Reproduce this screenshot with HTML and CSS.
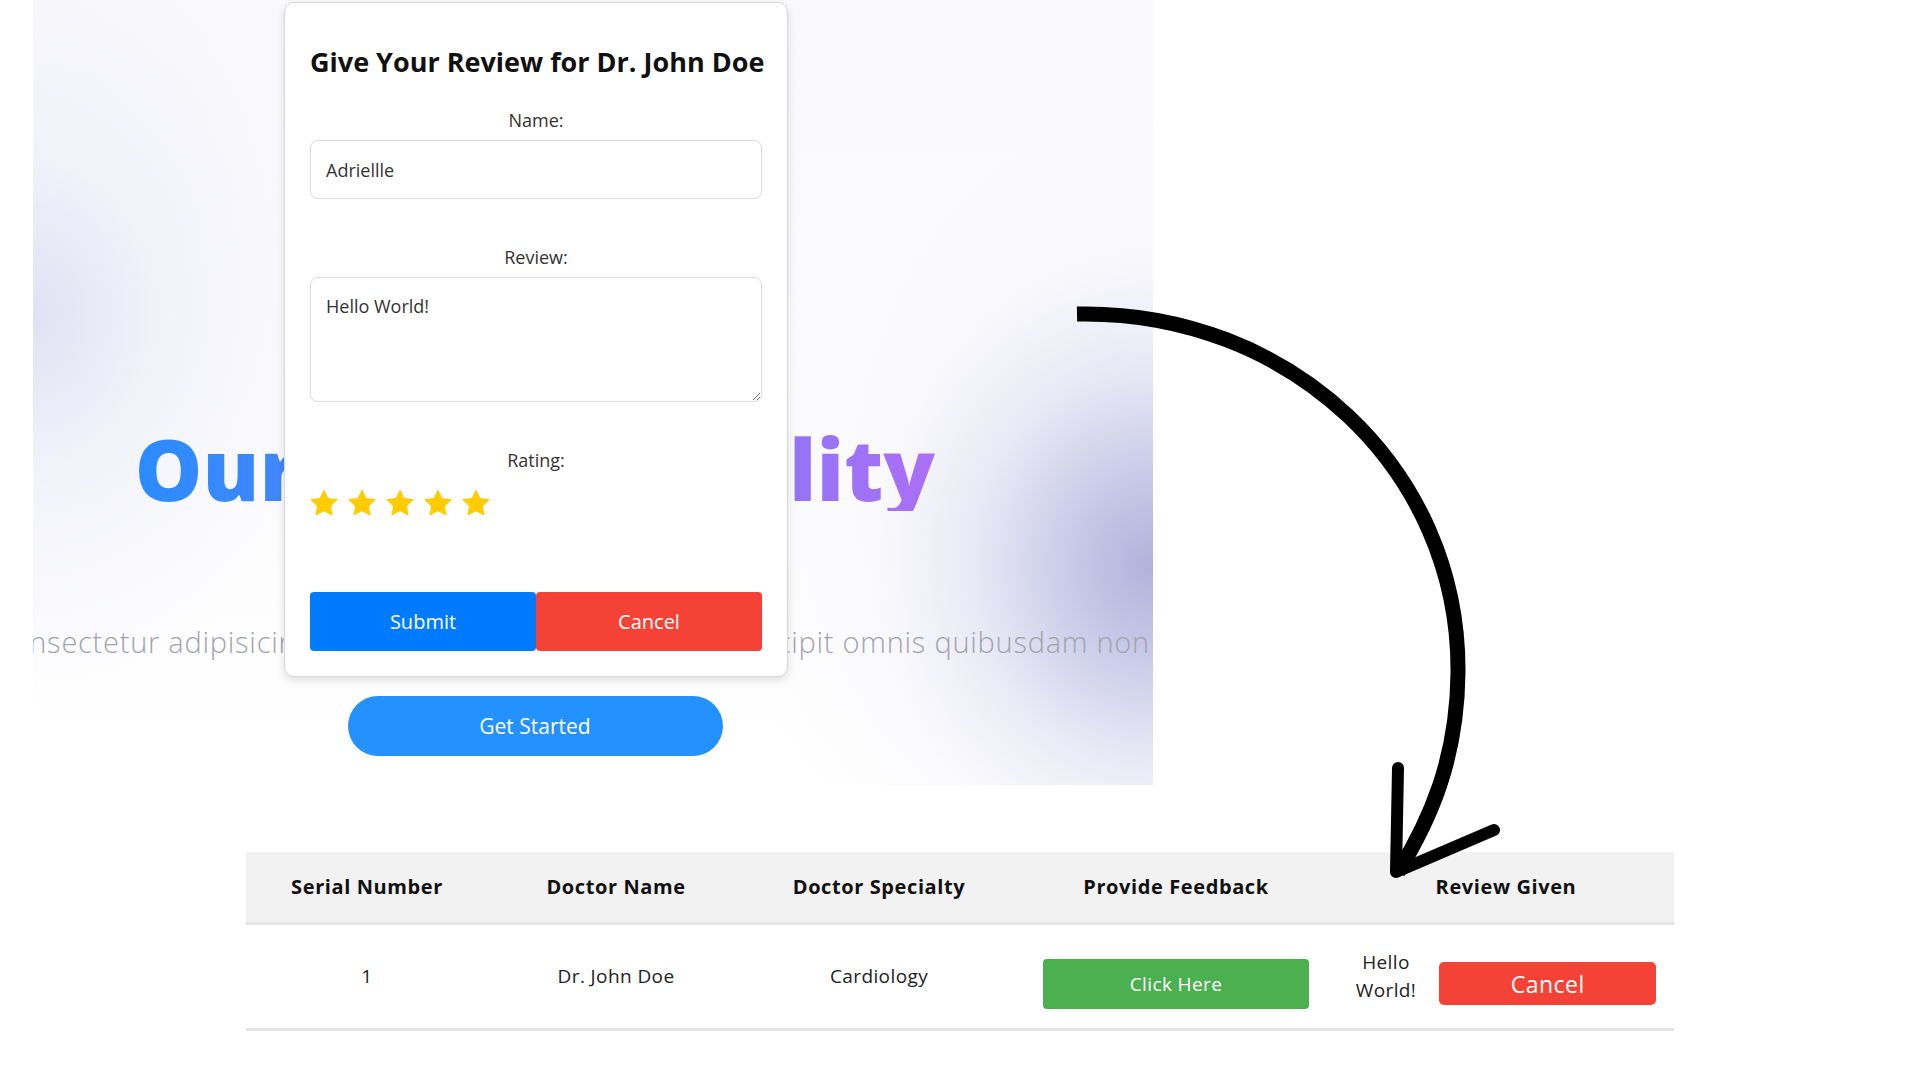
FILE: index.html
```html
<!DOCTYPE html>
<html lang="en">
<head>
<meta charset="utf-8">
<title>Doctor Review</title>
<link rel="stylesheet" href="styles.css">
</head>
<body>
<div class="canvas">
  <section class="hero">
    <h1 class="hero-title">Our Speciality</h1>
    <div class="hero-sub-row">
      <p class="hero-sub">Lorem ipsum dolor sit amet consectetur adipisicing elit. Quos illo eius, maxime et suscipit omnis quibusdam non</p>
    </div>
    <button class="btn-start" type="button">Get Started</button>

    <div class="modal">
      <h2 class="modal-title">Give Your Review for Dr. John Doe</h2>
      <div class="field">
        <label for="name">Name:</label>
        <input id="name" type="text" value="Adriellle">
      </div>
      <div class="field">
        <label for="review">Review:</label>
        <textarea id="review">Hello World!</textarea>
      </div>
      <div class="field field-rating">
        <label>Rating:</label>
        <div class="stars">
          <svg class="star" viewBox="2 2 20 19.1"><polygon points="12,2 15.09,8.26 22,9.27 17,14.14 18.18,21.02 12,17.77 5.82,21.02 7,14.14 2,9.27 8.91,8.26"/></svg>
          <svg class="star" viewBox="2 2 20 19.1"><polygon points="12,2 15.09,8.26 22,9.27 17,14.14 18.18,21.02 12,17.77 5.82,21.02 7,14.14 2,9.27 8.91,8.26"/></svg>
          <svg class="star" viewBox="2 2 20 19.1"><polygon points="12,2 15.09,8.26 22,9.27 17,14.14 18.18,21.02 12,17.77 5.82,21.02 7,14.14 2,9.27 8.91,8.26"/></svg>
          <svg class="star" viewBox="2 2 20 19.1"><polygon points="12,2 15.09,8.26 22,9.27 17,14.14 18.18,21.02 12,17.77 5.82,21.02 7,14.14 2,9.27 8.91,8.26"/></svg>
          <svg class="star" viewBox="2 2 20 19.1"><polygon points="12,2 15.09,8.26 22,9.27 17,14.14 18.18,21.02 12,17.77 5.82,21.02 7,14.14 2,9.27 8.91,8.26"/></svg>
        </div>
      </div>
      <div class="actions">
        <button class="btn btn-submit" type="button">Submit</button>
        <button class="btn btn-cancel" type="button">Cancel</button>
      </div>
    </div>
  </section>

  <table class="doctors">
    <colgroup>
      <col class="c1"><col class="c2"><col class="c3"><col class="c4"><col class="c5">
    </colgroup>
    <thead>
      <tr>
        <th>Serial Number</th>
        <th>Doctor Name</th>
        <th>Doctor Specialty</th>
        <th>Provide Feedback</th>
        <th>Review Given</th>
      </tr>
    </thead>
    <tbody>
      <tr>
        <td>1</td>
        <td>Dr. John Doe</td>
        <td>Cardiology</td>
        <td><button class="btn-feedback" type="button">Click Here</button></td>
        <td>
          <div class="review-cell">
            <span class="review-text">Hello World!</span>
            <button class="btn-remove" type="button">Cancel</button>
          </div>
        </td>
      </tr>
    </tbody>
  </table>

  <svg class="arrow" width="1920" height="1080" viewBox="0 0 1920 1080">
    <path d="M1077,314 C1290,310 1460,470 1458,673 C1457,760 1430,820 1398,872" fill="none" stroke="#000" stroke-width="15"/>
    <path d="M1398,768 L1396,872 L1494,830" fill="none" stroke="#000" stroke-width="12" stroke-linecap="round" stroke-linejoin="round"/>
  </svg>
</div>
</body>
</html>
```
FILE: styles.css
```css
* { box-sizing: border-box; }

html, body {
  margin: 0;
  padding: 0;
  background: #fff;
}

body {
  font-family: "Open Sans", "Liberation Sans", sans-serif;
  color: #222;
}

input, textarea, button {
  font-family: inherit;
}

.canvas {
  position: relative;
  width: 1920px;
  height: 1080px;
  overflow: hidden;
}

/* ---------- hero ---------- */
.hero {
  position: relative;
  margin-left: 33px;
  width: 1120px;
  height: 785px;
  overflow: hidden;
  display: flex;
  flex-direction: column;
  align-items: center;
  padding: 426px 116px 0 0;
  background:
    radial-gradient(ellipse 400px 440px at 100% 72%, rgba(176,178,219,1) 0%, rgba(190,192,228,.85) 20%, rgba(216,217,239,.55) 45%, rgba(240,240,249,.25) 70%, rgba(255,255,255,0) 100%),
    radial-gradient(ellipse 300px 380px at 0% 40%, rgba(224,226,244,1) 0%, rgba(237,238,249,.6) 45%, rgba(255,255,255,0) 100%),
    linear-gradient(180deg, #f9f9fc 0%, #fdfdfe 70%, #ffffff 100%);
}

.hero-title {
  margin: 0;
  font-size: 85px;
  font-weight: 800;
  line-height: 1;
  white-space: nowrap;
  word-spacing: 185px;
  background: linear-gradient(90deg, #2a8cff 0%, #ab6ff5 100%);
  -webkit-background-clip: text;
  background-clip: text;
  color: transparent;
}

.hero-sub-row {
  align-self: stretch;
  margin: 113px -113px 0 0;
  display: flex;
  justify-content: flex-end;
}

.hero-sub {
  margin: 0;
  white-space: nowrap;
  font-size: 29px;
  font-weight: 300;
  letter-spacing: .75px;
  line-height: 36px;
  color: #a2a3ad;
}

.btn-start {
  margin-top: 36px;
  width: 375px;
  height: 60px;
  border: none;
  border-radius: 30px;
  background: #2391fe;
  color: #fff;
  font-size: 21px;
  font-weight: 500;
}

/* ---------- modal ---------- */
.modal {
  position: absolute;
  left: 251px;
  top: 2px;
  width: 504px;
  height: 675px;
  background: #fff;
  border: 1px solid #d8d8d8;
  border-radius: 10px;
  box-shadow: 0 4px 10px rgba(0,0,0,.12);
  padding: 42px 25px 0;
  display: flex;
  flex-direction: column;
}

.modal-title {
  margin: 0 0 30px;
  font-size: 27px;
  font-weight: 700;
  line-height: 33px;
  letter-spacing: 0;
  text-align: center;
  color: #111;
  white-space: nowrap;
}

.field {
  display: flex;
  flex-direction: column;
  gap: 8px;
  margin-bottom: 46px;
}

.field label {
  display: block;
  font-size: 18px;
  line-height: 24px;
  text-align: center;
  color: #333;
}

.field input {
  height: 59px;
  border: 1px solid #dcdcdc;
  border-radius: 8px;
  padding: 0 15px;
  font-size: 18px;
  color: #333;
  background: #fff;
  outline: none;
}

.field textarea {
  height: 125px;
  border: 1px solid #dcdcdc;
  border-radius: 8px;
  padding: 16px 15px;
  font-size: 18px;
  line-height: 24px;
  color: #333;
  background: #fff;
  outline: none;
}

.field-rating {
  gap: 17px;
  margin-bottom: 76px;
}

.stars {
  display: flex;
  gap: 10px;
}

.star {
  width: 28px;
  height: 27px;
  fill: #ffcc00;
}

.actions {
  display: flex;
}

.btn {
  flex: 1;
  height: 59px;
  border: none;
  border-radius: 4px;
  color: #fff;
  font-size: 20px;
  font-weight: 500;
}

.btn-submit { background: #007bff; }
.btn-cancel { background: #f44336; }

/* ---------- table ---------- */
.doctors {
  margin: 67px 0 0 246px;
  width: 1428px;
  border-collapse: collapse;
  table-layout: fixed;
}

.c1 { width: 242px; }
.c2 { width: 256px; }
.c3 { width: 270px; }
.c4 { width: 324px; }
.c5 { width: 336px; }

.doctors th {
  height: 71px;
  padding: 0 10px;
  background: #f2f2f2;
  border-bottom: 3px solid #e4e4e4;
  font-size: 20px;
  font-weight: 700;
  letter-spacing: .6px;
  color: #111;
  text-align: center;
}

.doctors td {
  height: 106px;
  padding: 0 10px;
  border-bottom: 3px solid #e4e4e4;
  font-size: 19px;
  letter-spacing: .4px;
  color: #222;
  text-align: center;
  vertical-align: middle;
}

.btn-feedback {
  display: block;
  margin: 16px auto 0;
  width: 266px;
  height: 50px;
  border: none;
  border-radius: 4px;
  background: #4caf50;
  color: #fff;
  font-size: 19px;
  letter-spacing: .4px;
}

.review-cell {
  display: flex;
  align-items: center;
  justify-content: center;
  gap: 23px;
}

.review-text {
  width: min-content;
  font-size: 19px;
  line-height: 28px;
  color: #222;
}

.btn-remove {
  width: 217px;
  height: 43px;
  margin-top: 15px;
  border: none;
  border-radius: 5px;
  background: #f44336;
  color: #fff;
  font-size: 23px;
  letter-spacing: .5px;
}

/* ---------- annotation ---------- */
.arrow {
  position: absolute;
  left: 0;
  top: 0;
  pointer-events: none;
}
```
